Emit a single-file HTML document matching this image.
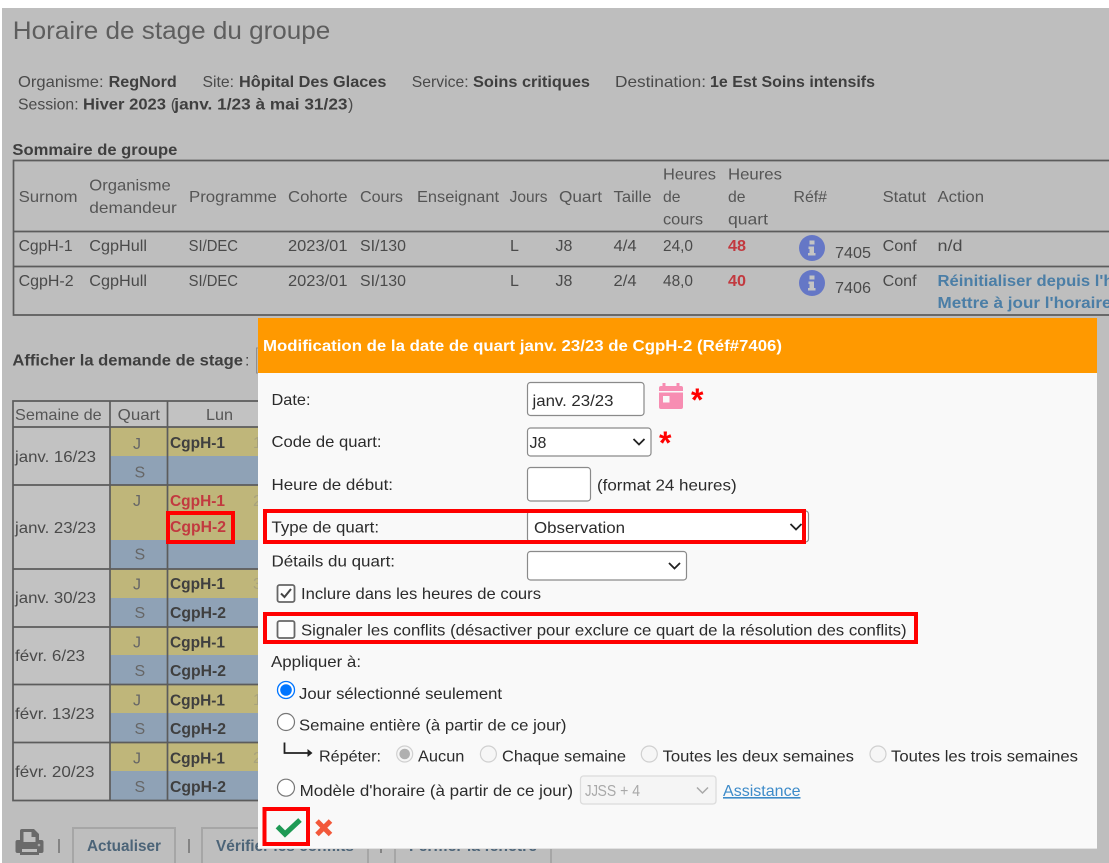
<!DOCTYPE html>
<html lang="fr">
<head>
<meta charset="utf-8">
<title>Horaire de stage du groupe</title>
<style>
html,body{margin:0;padding:0;background:#fff;width:1109px;height:863px;overflow:hidden}
svg{display:block;position:absolute;left:0;top:0}
text{font-family:"Liberation Sans",Arial,sans-serif;font-size:16px;fill:#4a4a4a;white-space:pre}
.b{font-weight:700;fill:#3f3f3f}
.h{fill:#555}
.r{font-weight:700;fill:#c2393f}
.l{font-weight:700;fill:#4b7ea6}
.m{fill:#2b2b2b}
.f{fill:#a8a27c}
.q{fill:#666}
.g{font-weight:700;fill:#4c6478}
.d{fill:#a9a9a9}
.ast{font-weight:700;font-size:32px;fill:#f00}
.ln{stroke:#5c5c5c;stroke-width:1.7;fill:none}
.y{fill:#bfb67a}
.u{fill:#8fa2b6}
.box{fill:#fff;stroke:#8a8a8a;stroke-width:1.2}
.chev{fill:none;stroke:#222;stroke-width:1.8}
.red{fill:none;stroke:#f00;stroke-width:4}
.rad{fill:#fff;stroke:#777;stroke-width:1.2}
.dis{fill:#f6f6f6;stroke:#d0d0d0;stroke-width:1.2}
.btn{fill:none;stroke:#a6a6a6;stroke-width:2}
</style>
</head>
<body>
<svg width="1109" height="863" viewBox="0 0 1109 863" xmlns="http://www.w3.org/2000/svg">
<rect x="2" y="8" width="1107" height="855" fill="#bebebe"/>

<text x="12.8" y="39" style="font-size:25px;fill:#5e5e5e" textLength="317.5" lengthAdjust="spacingAndGlyphs">Horaire de stage du groupe</text>

<text x="18" y="87" textLength="85.6" lengthAdjust="spacingAndGlyphs">Organisme:</text>
<text x="108.6" y="87" class="b" textLength="68.2" lengthAdjust="spacingAndGlyphs">RegNord</text>
<text x="202.5" y="87" textLength="31.5" lengthAdjust="spacingAndGlyphs">Site:</text>
<text x="239" y="87" class="b" textLength="147.4" lengthAdjust="spacingAndGlyphs">Hôpital Des Glaces</text>
<text x="411.8" y="87" textLength="56.8" lengthAdjust="spacingAndGlyphs">Service:</text>
<text x="473" y="87" class="b" textLength="117" lengthAdjust="spacingAndGlyphs">Soins critiques</text>
<text x="615" y="87" textLength="91" lengthAdjust="spacingAndGlyphs">Destination:</text>
<text x="710" y="87" class="b" textLength="165" lengthAdjust="spacingAndGlyphs">1e Est Soins intensifs</text>
<text x="18" y="109.5" textLength="60.6" lengthAdjust="spacingAndGlyphs">Session:</text>
<text x="83" y="109.5" class="b" textLength="83" lengthAdjust="spacingAndGlyphs">Hiver 2023</text>
<text x="170.7" y="109.5">(</text>
<text x="174.3" y="109.5" class="b" textLength="173.2" lengthAdjust="spacingAndGlyphs">janv. 1/23 à mai 31/23</text>
<text x="348" y="109.5">)</text>

<text x="12.4" y="155" class="b" textLength="165" lengthAdjust="spacingAndGlyphs">Sommaire de groupe</text>

<!-- summary table -->
<path class="ln" d="M1109 160.500H13.500V315H1109M13 231.500H1109M13 266.500H1109"/>
<text x="18.600" y="202" class="h" textLength="58.900" lengthAdjust="spacingAndGlyphs">Surnom</text>
<text x="89.300" y="190.700" class="h" textLength="81.400" lengthAdjust="spacingAndGlyphs">Organisme</text>
<text x="89.300" y="213" class="h" textLength="87.500" lengthAdjust="spacingAndGlyphs">demandeur</text>
<text x="189" y="202" class="h" textLength="87.800" lengthAdjust="spacingAndGlyphs">Programme</text>
<text x="288" y="202" class="h" textLength="59.500" lengthAdjust="spacingAndGlyphs">Cohorte</text>
<text x="360" y="202" class="h" textLength="43" lengthAdjust="spacingAndGlyphs">Cours</text>
<text x="417" y="202" class="h" textLength="82" lengthAdjust="spacingAndGlyphs">Enseignant</text>
<text x="509.600" y="202" class="h" textLength="37.900" lengthAdjust="spacingAndGlyphs">Jours</text>
<text x="559" y="202" class="h" textLength="43" lengthAdjust="spacingAndGlyphs">Quart</text>
<text x="613.500" y="202" class="h" textLength="38" lengthAdjust="spacingAndGlyphs">Taille</text>
<text x="663" y="179.500" class="h" textLength="53" lengthAdjust="spacingAndGlyphs">Heures</text>
<text x="663" y="202" class="h" textLength="17.500" lengthAdjust="spacingAndGlyphs">de</text>
<text x="663" y="224.500" class="h" textLength="40" lengthAdjust="spacingAndGlyphs">cours</text>
<text x="728" y="179.500" class="h" textLength="54" lengthAdjust="spacingAndGlyphs">Heures</text>
<text x="728" y="202" class="h" textLength="17.500" lengthAdjust="spacingAndGlyphs">de</text>
<text x="728" y="224.500" class="h" textLength="40" lengthAdjust="spacingAndGlyphs">quart</text>
<text x="793.500" y="202" class="h" textLength="33.500" lengthAdjust="spacingAndGlyphs">Réf#</text>
<text x="882.600" y="202" class="h" textLength="43.400" lengthAdjust="spacingAndGlyphs">Statut</text>
<text x="937.500" y="202" class="h" textLength="46.500" lengthAdjust="spacingAndGlyphs">Action</text>

<text x="18.600" y="251" textLength="54" lengthAdjust="spacingAndGlyphs">CgpH-1</text>
<text x="89.300" y="251" textLength="57.700" lengthAdjust="spacingAndGlyphs">CgpHull</text>
<text x="188.600" y="251" textLength="49.400" lengthAdjust="spacingAndGlyphs">SI/DEC</text>
<text x="288" y="251" textLength="59.500" lengthAdjust="spacingAndGlyphs">2023/01</text>
<text x="360" y="251" textLength="46" lengthAdjust="spacingAndGlyphs">SI/130</text>
<text x="510" y="251">L</text>
<text x="555.500" y="251">J8</text>
<text x="613.500" y="251" textLength="23.100" lengthAdjust="spacingAndGlyphs">4/4</text>
<text x="663" y="251" textLength="30" lengthAdjust="spacingAndGlyphs">24,0</text>
<text x="728" y="251" class="r" textLength="18" lengthAdjust="spacingAndGlyphs">48</text>
<text x="835" y="258" textLength="36" lengthAdjust="spacingAndGlyphs">7405</text>
<text x="882.600" y="251" textLength="34" lengthAdjust="spacingAndGlyphs">Conf</text>
<text x="937.500" y="251" textLength="25" lengthAdjust="spacingAndGlyphs">n/d</text>

<text x="18.600" y="286" textLength="55" lengthAdjust="spacingAndGlyphs">CgpH-2</text>
<text x="89.300" y="286" textLength="57.700" lengthAdjust="spacingAndGlyphs">CgpHull</text>
<text x="188.600" y="286" textLength="49.400" lengthAdjust="spacingAndGlyphs">SI/DEC</text>
<text x="288" y="286" textLength="59.500" lengthAdjust="spacingAndGlyphs">2023/01</text>
<text x="360" y="286" textLength="46" lengthAdjust="spacingAndGlyphs">SI/130</text>
<text x="510" y="286">L</text>
<text x="555.500" y="286">J8</text>
<text x="613.500" y="286" textLength="23.100" lengthAdjust="spacingAndGlyphs">2/4</text>
<text x="663" y="286" textLength="30" lengthAdjust="spacingAndGlyphs">48,0</text>
<text x="728" y="286" class="r" textLength="18" lengthAdjust="spacingAndGlyphs">40</text>
<text x="835" y="293" textLength="36" lengthAdjust="spacingAndGlyphs">7406</text>
<text x="882.600" y="286" textLength="34" lengthAdjust="spacingAndGlyphs">Conf</text>
<text x="937.500" y="286" class="l" textLength="176" lengthAdjust="spacingAndGlyphs">Réinitialiser depuis l'h</text>
<text x="937.500" y="308" class="l" textLength="174" lengthAdjust="spacingAndGlyphs">Mettre à jour l'horaire</text>

<!-- info icons -->
<g>
<circle cx="812" cy="248" r="13" fill="#6577c6"/>
<path d="M809.500 240.500h5v4h-5zM808.500 246.500h5.500v6.500h1.500v2.500h-7.500v-2.500h1.500v-4h-1z" fill="#c4c4c4"/>
</g>
<g>
<circle cx="812" cy="283" r="13" fill="#6577c6"/>
<path d="M809.500 275.500h5v4h-5zM808.500 281.500h5.500v6.500h1.500v2.500h-7.500v-2.500h1.500v-4h-1z" fill="#c4c4c4"/>
</g>

<text x="12.400" y="365.700" class="b" textLength="230.600" lengthAdjust="spacingAndGlyphs">Afficher la demande de stage</text>
<text x="245" y="365.700">:</text>
<rect x="256.500" y="348" width="6" height="25" fill="#b8b8b8" stroke="#8f8f8f"/>

<!-- schedule table -->
<rect x="13" y="427" width="97" height="373" fill="#c2c2c2"/>
<rect x="13" y="401" width="245" height="26" fill="#c2c2c2"/>
<rect class="y" x="110" y="427" width="148" height="29"/>
<rect class="u" x="110" y="456" width="148" height="29"/>
<rect class="y" x="110" y="485" width="148" height="55"/>
<rect class="u" x="110" y="540" width="148" height="29"/>
<rect class="y" x="110" y="569" width="148" height="29"/>
<rect class="u" x="110" y="598" width="148" height="29"/>
<rect class="y" x="110" y="627" width="148" height="28"/>
<rect class="u" x="110" y="655" width="148" height="29"/>
<rect class="y" x="110" y="684" width="148" height="29"/>
<rect class="u" x="110" y="713" width="148" height="29"/>
<rect class="y" x="110" y="742" width="148" height="29"/>
<rect class="u" x="110" y="771" width="148" height="29"/>
<path class="ln" d="M258 401H13V800.500H258M13 427H258M13 485H258M13 569H258M13 627H258M13 684.500H258M13 742.500H258M110 401V800M167.500 401V800"/>

<text x="15" y="420" class="h" textLength="86.700" lengthAdjust="spacingAndGlyphs">Semaine de</text>
<text x="117.700" y="420" class="h" textLength="42.300" lengthAdjust="spacingAndGlyphs">Quart</text>
<text x="206" y="420" class="h" textLength="27" lengthAdjust="spacingAndGlyphs">Lun</text>

<text x="15" y="462" textLength="81" lengthAdjust="spacingAndGlyphs">janv. 16/23</text>
<text x="15" y="533" textLength="81" lengthAdjust="spacingAndGlyphs">janv. 23/23</text>
<text x="15" y="603" textLength="81" lengthAdjust="spacingAndGlyphs">janv. 30/23</text>
<text x="15" y="661" textLength="70" lengthAdjust="spacingAndGlyphs">févr. 6/23</text>
<text x="15" y="719" textLength="79.500" lengthAdjust="spacingAndGlyphs">févr. 13/23</text>
<text x="15" y="777" textLength="79.500" lengthAdjust="spacingAndGlyphs">févr. 20/23</text>

<text x="133" y="449" class="q">J</text><text x="134.500" y="477.500" class="q">S</text>
<text x="133" y="506" class="q">J</text><text x="134.500" y="559.500" class="q">S</text>
<text x="133" y="589.500" class="q">J</text><text x="134.500" y="618" class="q">S</text>
<text x="133" y="647.500" class="q">J</text><text x="134.500" y="676" class="q">S</text>
<text x="133" y="705.500" class="q">J</text><text x="134.500" y="734" class="q">S</text>
<text x="133" y="763.500" class="q">J</text><text x="134.500" y="792" class="q">S</text>

<text x="170" y="448" class="b" textLength="55" lengthAdjust="spacingAndGlyphs">CgpH-1</text>
<text x="170" y="506" class="r" textLength="55" lengthAdjust="spacingAndGlyphs">CgpH-1</text>
<text x="170" y="532" class="r" textLength="56" lengthAdjust="spacingAndGlyphs">CgpH-2</text>
<text x="170" y="589" class="b" textLength="55" lengthAdjust="spacingAndGlyphs">CgpH-1</text>
<text x="170" y="618" class="b" textLength="56" lengthAdjust="spacingAndGlyphs">CgpH-2</text>
<text x="170" y="647.500" class="b" textLength="55" lengthAdjust="spacingAndGlyphs">CgpH-1</text>
<text x="170" y="676" class="b" textLength="56" lengthAdjust="spacingAndGlyphs">CgpH-2</text>
<text x="170" y="705.500" class="b" textLength="55" lengthAdjust="spacingAndGlyphs">CgpH-1</text>
<text x="170" y="734" class="b" textLength="56" lengthAdjust="spacingAndGlyphs">CgpH-2</text>
<text x="170" y="763.500" class="b" textLength="55" lengthAdjust="spacingAndGlyphs">CgpH-1</text>
<text x="170" y="792" class="b" textLength="56" lengthAdjust="spacingAndGlyphs">CgpH-2</text>
<text x="253" y="448" class="f">16</text>
<text x="253" y="506" class="f">23</text>
<text x="253" y="589" class="f">30</text>
<text x="253" y="705" class="f">13</text>
<text x="253" y="763" class="f">20</text>

<rect class="red" x="168" y="513" width="65" height="29"/>

<!-- bottom bar -->
<path d="M22 829h12l5 5v6h2.500a2 2 0 0 1 2 2v9a2 2 0 0 1-2 2H39v2H20v-2h-2.500a2 2 0 0 1-2-2v-9a2 2 0 0 1 2-2H20v-9a2 2 0 0 1 2-2zM23.500 832v10h12v-5h-4v-5zM22 849v3h15v-3z" fill="#6a6a6a" fill-rule="evenodd"/>
<circle cx="39" cy="845" r="1.300" fill="#a8a8a8"/>
<path d="M59 839v14M189 839v14M381 839v14" stroke="#666" stroke-width="1.300"/>
<rect class="btn" x="73" y="828" width="102" height="36"/>
<text x="87" y="851" class="g" textLength="74" lengthAdjust="spacingAndGlyphs">Actualiser</text>
<rect class="btn" x="202" y="828" width="166" height="36"/>
<text x="216" y="851" class="g" textLength="138" lengthAdjust="spacingAndGlyphs">Vérifier les conflits</text>
<rect class="btn" x="395" y="828" width="156" height="36"/>
<text x="409" y="851" class="g" textLength="128" lengthAdjust="spacingAndGlyphs">Fermer la fenêtre</text>

<!-- modal -->
<rect x="258" y="318" width="839" height="531" fill="#f9f9f9"/>
<rect x="258" y="848" width="839" height="1" fill="#e2e2e2"/>
<rect x="258" y="318" width="839" height="55" fill="#ff9900"/>
<text x="263" y="351" style="font-weight:700;fill:#fff" textLength="519" lengthAdjust="spacingAndGlyphs">Modification de la date de quart janv. 23/23 de CgpH-2 (Réf#7406)</text>

<text x="271.500" y="405" class="m" textLength="39" lengthAdjust="spacingAndGlyphs">Date:</text>
<rect class="box" x="527.500" y="382.500" width="116.500" height="33" rx="3"/>
<text x="532.500" y="406" class="m" textLength="81" lengthAdjust="spacingAndGlyphs">janv. 23/23</text>
<path d="M662.500 383h3v3h11v-3h3v3h1.500a2 2 0 0 1 2 2v3h-24v-3a2 2 0 0 1 2-2h1.500zM659 392.500h24V407a2 2 0 0 1-2 2h-20a2 2 0 0 1-2-2zM663 396v6.500h6.500V396z" fill="#f78db2" fill-rule="evenodd"/>
<text x="691" y="411" class="ast">*</text>

<text x="271.500" y="447" class="m" textLength="110" lengthAdjust="spacingAndGlyphs">Code de quart:</text>
<rect class="box" x="527.500" y="428" width="123.500" height="28" rx="3"/>
<text x="529.500" y="448" class="m">J8</text>
<path class="chev" d="M633.500 439l5.500 5.500 5.500-5.500"/>
<text x="659" y="454" class="ast">*</text>

<text x="271.500" y="490" class="m" textLength="121.500" lengthAdjust="spacingAndGlyphs">Heure de début:</text>
<rect class="box" x="527.500" y="467.500" width="63" height="33.500" rx="3"/>
<text x="597" y="490.700" class="m" textLength="139.600" lengthAdjust="spacingAndGlyphs">(format 24 heures)</text>

<rect class="box" x="527.500" y="511" width="281" height="31" rx="3"/>
<text x="271.500" y="532.700" class="m" textLength="107.500" lengthAdjust="spacingAndGlyphs">Type de quart:</text>
<text x="534" y="533" class="m" textLength="91" lengthAdjust="spacingAndGlyphs">Observation</text>
<path class="chev" d="M790.500 524l5.500 5.500 5.500-5.500"/>
<rect class="red" x="265" y="511" width="539" height="31"/>

<text x="271.500" y="566.700" class="m" textLength="123.500" lengthAdjust="spacingAndGlyphs">Détails du quart:</text>
<rect class="box" x="527.500" y="551.500" width="159" height="28.500" rx="3"/>
<path class="chev" d="M669 563l5.500 5.500 5.500-5.500"/>

<rect x="277.500" y="585" width="17" height="17" rx="2" fill="#fdfdfd" stroke="#666" stroke-width="1.800"/>
<path d="M281 593.500l3.500 3.500 6.500-8" fill="none" stroke="#444" stroke-width="2"/>
<text x="301" y="599" class="m" textLength="240" lengthAdjust="spacingAndGlyphs">Inclure dans les heures de cours</text>

<rect x="277.500" y="621" width="17" height="17" rx="2" fill="#fdfdfd" stroke="#666" stroke-width="1.800"/>
<text x="301" y="635.700" class="m" textLength="605.600" lengthAdjust="spacingAndGlyphs">Signaler les conflits (désactiver pour exclure ce quart de la résolution des conflits)</text>
<rect class="red" x="265" y="614" width="651" height="28"/>

<text x="271" y="667" class="m" textLength="90" lengthAdjust="spacingAndGlyphs">Appliquer à:</text>

<circle cx="286" cy="690" r="8.500" fill="#fff" stroke="#0075ff" stroke-width="1.300"/>
<circle cx="286" cy="690" r="5.800" fill="#0075ff"/>
<text x="299" y="699" class="m" textLength="203" lengthAdjust="spacingAndGlyphs">Jour sélectionné seulement</text>

<circle class="rad" cx="286" cy="722" r="8.500"/>
<text x="299" y="730.600" class="m" textLength="267.500" lengthAdjust="spacingAndGlyphs">Semaine entière (à partir de ce jour)</text>

<path d="M284.500 742.500v10.500h24" fill="none" stroke="#222" stroke-width="1.800"/>
<path d="M307.500 749l5 4-5 4z" fill="#222"/>
<text x="319" y="761.600" class="m" textLength="62" lengthAdjust="spacingAndGlyphs">Répéter:</text>

<circle class="dis" cx="404.700" cy="754" r="8"/>
<circle cx="404.700" cy="754" r="5.300" fill="#b0b0b0"/>
<text x="418" y="761.600" class="m" textLength="46.400" lengthAdjust="spacingAndGlyphs">Aucun</text>
<circle class="dis" cx="488.400" cy="754" r="8"/>
<text x="502" y="761.600" class="m" textLength="124" lengthAdjust="spacingAndGlyphs">Chaque semaine</text>
<circle class="dis" cx="649.300" cy="754" r="8"/>
<text x="662.600" y="761.600" class="m" textLength="191.400" lengthAdjust="spacingAndGlyphs">Toutes les deux semaines</text>
<circle class="dis" cx="878" cy="754" r="8"/>
<text x="891" y="761.600" class="m" textLength="187" lengthAdjust="spacingAndGlyphs">Toutes les trois semaines</text>

<circle class="rad" cx="286" cy="787.700" r="8.500"/>
<text x="299.600" y="796" class="m" textLength="273.400" lengthAdjust="spacingAndGlyphs">Modèle d'horaire (à partir de ce jour)</text>
<rect x="580.500" y="776" width="135.500" height="28" rx="3" fill="#f5f5f5" stroke="#dcdcdc" stroke-width="1.300"/>
<text x="585" y="796" class="d" textLength="13" lengthAdjust="spacingAndGlyphs">JJ</text>
<text x="597.500" y="796" class="d" textLength="42.500" lengthAdjust="spacingAndGlyphs">SS + 4</text>
<path d="M697 787.500l5.500 5.500 5.500-5.500" fill="none" stroke="#a8a8a8" stroke-width="1.500"/>
<text x="723" y="796" style="fill:#3d8bc9;text-decoration:underline" textLength="77.500" lengthAdjust="spacingAndGlyphs">Assistance</text>

<path d="M277.500 826.500l7.500 7.500 15-14" fill="none" stroke="#1f9a55" stroke-width="5.200"/>
<path d="M317 821l13.500 13.500M330.500 821L317 834.500" fill="none" stroke="#f2583a" stroke-width="5"/>
<rect class="red" x="264.500" y="809" width="43.500" height="35"/>
</svg>
</body>
</html>
